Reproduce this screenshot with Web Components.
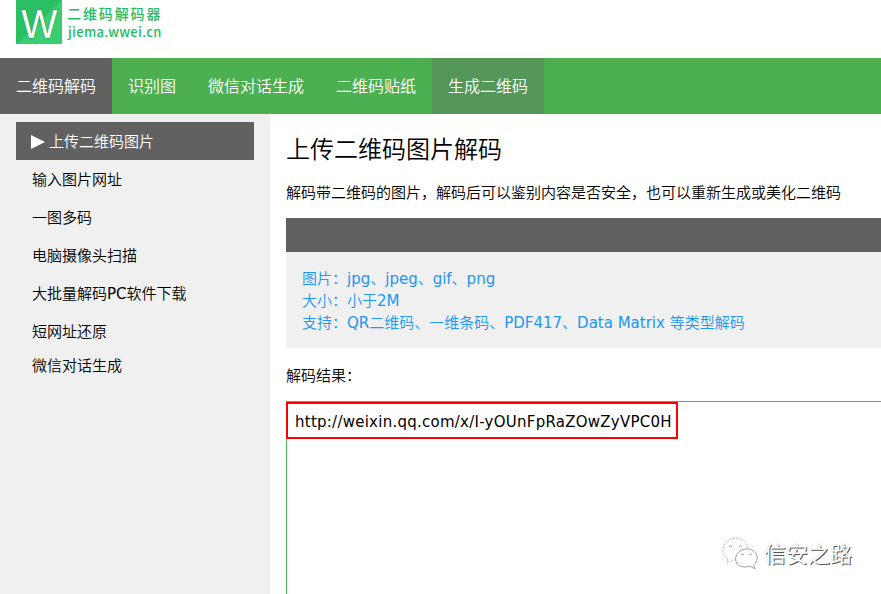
<!DOCTYPE html>
<html lang="zh-CN">
<head>
<meta charset="utf-8">
<title>二维码解码器</title>
<style>
html,body{margin:0;height:594px;overflow:hidden;background:#fff}
body{font:15px/22px "DejaVu Sans","Noto Sans CJK SC DemiLight","Noto Sans CJK SC",sans-serif;color:#000}
</style>
</head>
<body>
<decoder-page></decoder-page>
<script>
const define=(name,markup)=>customElements.define(name,class extends HTMLElement{
  constructor(){super();this.attachShadow({mode:'open'}).innerHTML=markup;}
});

define('site-logo',`<style>
:host{display:flex;height:58px;padding-left:16px;box-sizing:border-box;color:#22bd5f}
svg{display:block;flex:none;overflow:visible}
.name{margin-left:5px;font:14px/16px "Noto Sans CJK SC",sans-serif;font-weight:500}
.name div{white-space:nowrap}
.cn{margin-top:5px;letter-spacing:1.9px}
.en{margin:2px 0 0 1px;font:500 13px/18px "Noto Sans CJK SC",sans-serif;letter-spacing:.35px}
</style>
<svg width="46" height="44" viewBox="0 0 46 44"><path fill="#2abf63" d="M0 0h46v44H0z"/><path fill="#3ace72" d="M46 0v44H1z"/><text x="23.300" y="38" text-anchor="middle" font-family="Liberation Sans" font-size="41" textLength="36" lengthAdjust="spacingAndGlyphs" fill="#fff" stroke="#20ac53" stroke-width="1.500" paint-order="stroke">W</text></svg>
<div class="name"><div class="cn">二维码解码器</div><div class="en">jiema.wwei.cn</div></div>`);

define('nav-item',`<style>
:host{display:block;padding:1px 16px 0;font-size:16px;line-height:55px;color:#fff;white-space:nowrap}
:host([active]){background:#616161}
:host([accent]){background:#559659}
</style><slot></slot>`);

define('nav-bar',`<style>:host{display:flex;height:56px;background:#4caf50}</style><slot></slot>`);

define('side-item',`<style>
:host{display:flex;align-items:center;height:38px;padding:2px 0 0 16px;box-sizing:border-box;white-space:nowrap}
:host([active]){background:#616161;color:#fff}
:host([compact]){height:30px}
svg{display:none;margin:-1px 4px 0 -1px}
:host([active]) svg{display:block}
</style><svg width="14" height="14"><path d="M0 0l14 7-14 7z" fill="#fff"/></svg><slot></slot>`);

define('side-menu',`<style>
:host{display:block;width:270px;flex:none;box-sizing:border-box;padding:8px 16px;background:#f0f0f0}
</style><slot></slot>`);

define('file-hints',`<style>
:host{display:block;height:130px;background:#f0f0f0;color:#2196f3}
.bar{height:34px;background:#616161}
.list{padding:16px;white-space:nowrap}
</style><div class="bar"></div><div class="list"><slot></slot></div>`);

define('result-box',`<style>
:host{display:block;height:220px;border:1px solid #4caf50;border-width:1px 0 0 1px;box-sizing:border-box}
.mark{width:392px;height:37px;margin-left:-1px;box-sizing:border-box;border:2px solid #f00;padding-left:7px;line-height:36px;white-space:nowrap;letter-spacing:.25px}
</style><div class="mark"><slot></slot></div>`);

define('wechat-mark',`<style>
:host{position:absolute;left:722px;top:534px;display:flex;align-items:center;height:38px;color:#fff;font:22px/36px "Noto Sans CJK SC",sans-serif}
span{margin:-3px 0 0 5px;white-space:nowrap;text-shadow:1px 1px 0 #555,0 0 1px #bbb}
</style><svg width="37" height="36" viewBox="0 0 37 36" fill="#fff" stroke="#888" stroke-width=".8"><path stroke="#aaa" stroke-dasharray="2 1" d="M6 24C-1 19-1 10 7 5c8-4 17-1 19 8M6 24l-1 4 5-3h4"/><path d="M31.500 30c7-5 4-16-7-16S10 27 18 31c4 1.500 7 1.200 10 0l5 3z"/><path fill="none" d="M7 12q1.500-2.500 3 0M17 12q1.500-2.500 3 0M19 20q1.500-2 3 0M27 20q1.500-2 3 0"/></svg><span><slot></slot></span>`);

define('decoder-page',`<style>
:host{display:block;height:594px;overflow:hidden;position:relative}
.body{display:flex;height:480px}
main{flex:1;min-width:0;padding-left:16px}
h1{margin:0;padding-top:16px;font-size:24px;line-height:40px;font-weight:400}
p{margin:0;white-space:nowrap}
.intro{padding:12px 0 14px;height:22px}
.label{padding:17px 0 15px;margin-bottom:-1px}
</style>
<site-logo></site-logo>
<nav-bar><nav-item active>二维码解码</nav-item><nav-item>识别图</nav-item><nav-item>微信对话生成</nav-item><nav-item>二维码贴纸</nav-item><nav-item accent>生成二维码</nav-item></nav-bar>
<div class="body">
<side-menu><side-item active>上传二维码图片</side-item><side-item>输入图片网址</side-item><side-item>一图多码</side-item><side-item>电脑摄像头扫描</side-item><side-item>大批量解码PC软件下载</side-item><side-item>短网址还原</side-item><side-item compact>微信对话生成</side-item></side-menu>
<main><h1>上传二维码图片解码</h1><p class="intro">解码带二维码的图片，解码后可以鉴别内容是否安全，也可以重新生成或美化二维码</p>
<file-hints><p>图片：jpg、jpeg、gif、png</p><p>大小：小于2M</p><p>支持：QR二维码、一维条码、PDF417、Data Matrix 等类型解码</p></file-hints>
<p class="label">解码结果：</p>
<result-box>http://weixin.qq.com/x/I-yOUnFpRaZOwZyVPC0H</result-box></main>
</div>
<wechat-mark>信安之路</wechat-mark>`);
</script>
</body>
</html>
